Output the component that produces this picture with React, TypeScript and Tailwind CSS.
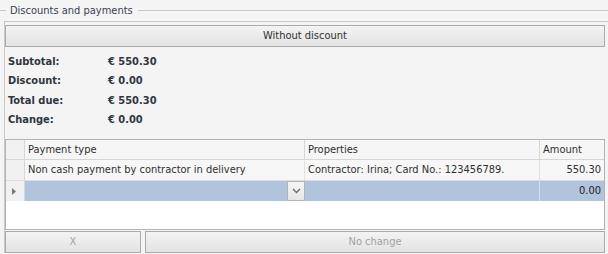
import React from "react";

const font = { fontFamily: '"DejaVu Sans Condensed", "DejaVu Sans", sans-serif', fontStretch: "condensed" as const };

function Btn({ children, disabled, className = "" }: { children: React.ReactNode; disabled?: boolean; className?: string }) {
  return (
    <div
      className={
        "h-[22px] flex items-center justify-center border border-[#ababab] bg-gradient-to-b from-[#f3f3f3] to-[#e3e3e3] text-[11px] " +
        (disabled ? "text-[#a3a3a3] " : "text-[#2f2f2f] ") +
        className
      }
    >
      {children}
    </div>
  );
}

export default function App() {
  const rows = [
    ["Subtotal:", "€ 550.30"],
    ["Discount:", "€ 0.00"],
    ["Total due:", "€ 550.30"],
    ["Change:", "€ 0.00"],
  ];
  return (
    <div className="w-[608px] h-[254px] overflow-hidden bg-[#f4f4f4] text-[11px] text-[#2f2f2f]" style={font}>
      <div className="flex items-center h-[21px]">
        <div className="w-[6px] h-px bg-[#c8c8c8]" />
        <span className="pl-[4px] pr-[5px] text-[11px] text-[#3a4252] leading-none">Discounts and payments</span>
        <div className="flex-1 h-px bg-[#c8c8c8]" />
      </div>
      <div className="ml-[4px] border-l border-t border-[#c8c8c8] pr-[3px] pt-[3px] flex flex-col">
        <Btn>Without discount</Btn>
        <div className="mt-[5px] pl-[3px] flex flex-col">
          {rows.map(([l, v]) => (
            <div key={l} className="h-[19.5px] flex items-center font-bold text-[#30363f]">
              <span className="w-[100px]">{l}</span>
              <span>{v}</span>
            </div>
          ))}
        </div>
        <div className="mt-[9px] h-[91px] border border-[#b2b2b2] bg-white flex flex-col">
          {/* header */}
          <div className="h-[20px] flex border-b border-[#d6d6d6] bg-[#f6f6f6]">
            <div className="w-[19px] border-r border-[#d6d6d6] bg-[#f1f1f1]" />
            <div className="w-[280px] border-r border-[#d6d6d6] pl-[3px] pt-[1px] flex items-center">Payment type</div>
            <div className="w-[235px] border-r border-[#d6d6d6] pl-[3px] pt-[1px] flex items-center">Properties</div>
            <div className="flex-1 pl-[3px] pt-[1px] flex items-center">Amount</div>
          </div>
          {/* row 1 */}
          <div className="h-[21px] flex border-b border-[#dcdcdc] bg-[#f7f7f7]">
            <div className="w-[19px] border-r border-[#d6d6d6] bg-[#f1f1f1]" />
            <div className="w-[280px] border-r border-[#e2e2e2] pl-[3px] pt-[1px] flex items-center">Non cash payment by contractor in delivery</div>
            <div className="w-[235px] border-r border-[#e2e2e2] pl-[3px] pt-[1px] flex items-center">Contractor: Irina; Card No.: 123456789.</div>
            <div className="flex-1 pr-[3px] pt-[1px] flex items-center justify-end">550.30</div>
          </div>
          {/* row 2 selected */}
          <div className="h-[20px] flex">
            <div className="w-[19px] border-r border-[#d6d6d6] bg-[#f1f1f1] flex items-center justify-center">
              <svg width="4" height="7" viewBox="0 0 4 7" className="ml-[-2px]">
                <path d="M0 0 L4 3.5 L0 7 Z" fill="#7a7a7a" />
              </svg>
            </div>
            <div className="w-[280px] bg-[#b0c4de] flex justify-end">
              <div className="w-[18px] h-full border border-[#b4b4b4] bg-gradient-to-b from-[#f5f5f5] to-[#e6e6e6] flex items-center justify-center">
                <svg width="9" height="6" viewBox="0 0 9 6">
                  <path d="M1 1 L4.5 4.5 L8 1" fill="none" stroke="#6a6a6a" strokeWidth="1.3" />
                </svg>
              </div>
            </div>
            <div className="w-[235px] border-r border-[#d3dcea] bg-[#b0c4de]" />
            <div className="flex-1 pr-[3px] pt-[1px] bg-[#b0c4de] flex items-center justify-end text-[#222]">0.00</div>
          </div>
          <div className="flex-1 bg-white" />
        </div>
        <div className="mt-[1px] flex gap-[4px]">
          <Btn disabled className="w-[136px]">X</Btn>
          <Btn disabled className="flex-1">No change</Btn>
        </div>
      </div>
    </div>
  );
}
